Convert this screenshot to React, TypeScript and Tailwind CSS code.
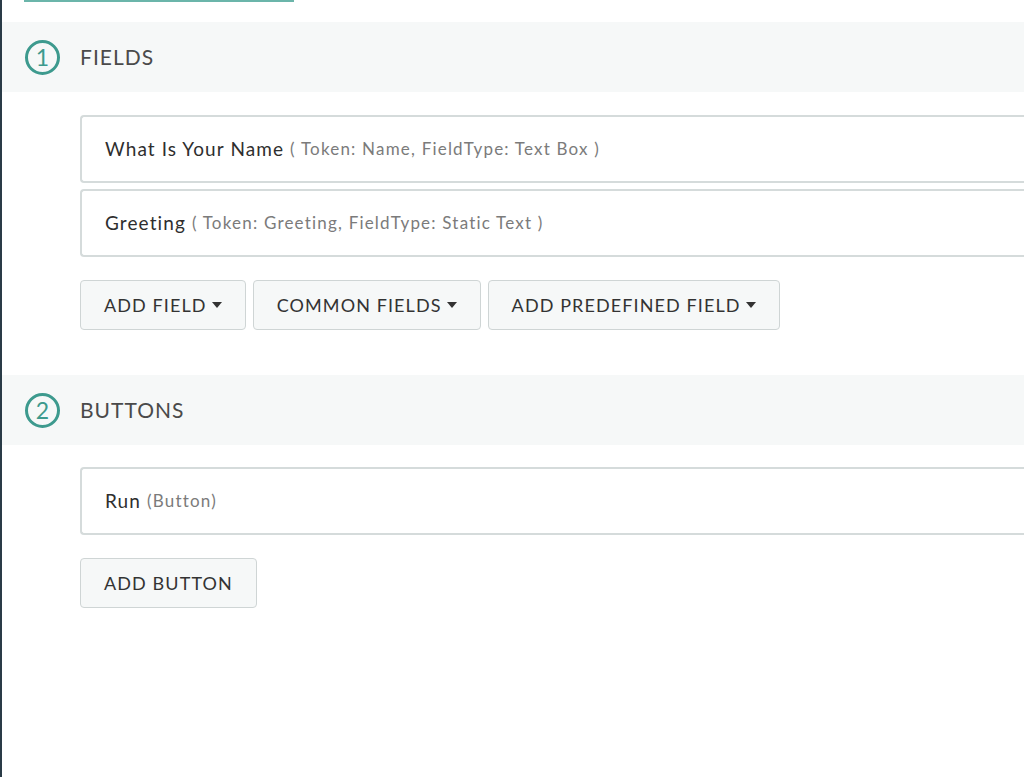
import React from 'react';

const font = { fontFamily: 'Lato, "Noto Sans", sans-serif' };

function SectionHeader({ n, title }: { n: string; title: string }) {
  return (
    <div className="flex h-[70px] items-center bg-[#f6f8f8] pl-[23px]">
      <div className="flex h-[35px] w-[35px] items-center justify-center rounded-full border-[3px] border-[#3d9a8e] text-[23px] leading-none text-[#3d9a8e]">
        {n}
      </div>
      <div className="ml-[20px] text-[21px] tracking-[1px] text-[#4a4a4a]">{title}</div>
    </div>
  );
}

function Card({ name, meta }: { name: string; meta: string }) {
  return (
    <div className="flex h-[68px] w-[1000px] items-center rounded-l-[4px] border-2 border-r-0 border-[#d5dbdb] bg-white pl-[23px]">
      <span className="text-[19px] tracking-[1.1px] text-[#2e2e2e]">{name}</span>
      <span className="ml-[6px] text-[17px] tracking-[1.2px] text-[#7b7b7b]">{meta}</span>
    </div>
  );
}

function Btn({ label, caret }: { label: string; caret?: boolean }) {
  return (
    <button className="flex h-[50px] items-center rounded-[4px] border border-[#cfd5d5] bg-[#f6f8f8] px-[23px] text-[18px] tracking-[1.1px] text-[#333]">
      {label}
      {caret && (
        <svg className="ml-[5px]" width="10" height="6" viewBox="0 0 10 6">
          <path d="M0 0h10L5 6z" fill="#333" />
        </svg>
      )}
    </button>
  );
}

export default function App() {
  return (
    <div className="h-[777px] w-[1024px] overflow-hidden border-l-2 border-[#2a3b47] bg-white" style={font}>
      <div className="ml-[22px] h-[2px] w-[270px] bg-[#6bb5aa]" />
      <div className="mt-[20px]">
        <SectionHeader n="1" title="FIELDS" />
        <div className="flex flex-col gap-[6px] pl-[78px] pt-[23px]">
          <Card name="What Is Your Name" meta="( Token: Name, FieldType: Text Box )" />
          <Card name="Greeting" meta="( Token: Greeting, FieldType: Static Text )" />
        </div>
        <div className="flex gap-[7px] pl-[78px] pt-[23px]">
          <Btn label="ADD FIELD" caret />
          <Btn label="COMMON FIELDS" caret />
          <Btn label="ADD PREDEFINED FIELD" caret />
        </div>
      </div>
      <div className="mt-[45px]">
        <SectionHeader n="2" title="BUTTONS" />
        <div className="pl-[78px] pt-[22px]">
          <Card name="Run" meta="(Button)" />
        </div>
        <div className="flex pl-[78px] pt-[23px]">
          <Btn label="ADD BUTTON" />
        </div>
      </div>
    </div>
  );
}
